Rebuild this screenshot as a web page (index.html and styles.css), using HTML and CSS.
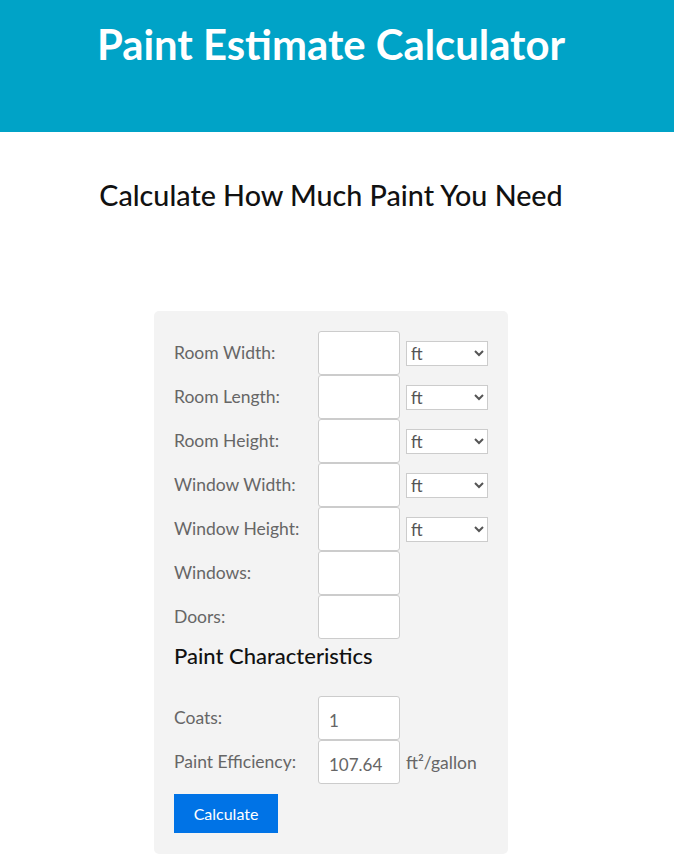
FILE: index.html
```html
<!DOCTYPE html>
<html lang="en">
<head>
    <meta charset="utf-8">
    <title>Paint Estimate Calculator</title>
    <link rel="stylesheet" href="styles.css">
</head>
<body>
    <header class="top">
        <h1>Paint Estimate Calculator</h1>
    </header>
    <main class="page">
        <h2 class="subtitle">Calculate How Much Paint You Need</h2>
        <form class="calc">
            <div class="row">
                <label>Room Width:</label>
                <input type="text" class="num">
                <select class="unit"><option>ft</option><option>m</option></select>
            </div>
            <div class="row">
                <label>Room Length:</label>
                <input type="text" class="num">
                <select class="unit"><option>ft</option><option>m</option></select>
            </div>
            <div class="row">
                <label>Room Height:</label>
                <input type="text" class="num">
                <select class="unit"><option>ft</option><option>m</option></select>
            </div>
            <div class="row">
                <label>Window Width:</label>
                <input type="text" class="num">
                <select class="unit"><option>ft</option><option>m</option></select>
            </div>
            <div class="row">
                <label>Window Height:</label>
                <input type="text" class="num">
                <select class="unit"><option>ft</option><option>m</option></select>
            </div>
            <div class="row">
                <label>Windows:</label>
                <input type="text" class="num">
            </div>
            <div class="row">
                <label>Doors:</label>
                <input type="text" class="num">
            </div>
            <h3 class="section">Paint Characteristics</h3>
            <div class="row">
                <label>Coats:</label>
                <input type="text" class="num" value="1">
            </div>
            <div class="row">
                <label>Paint Efficiency:</label>
                <input type="text" class="num" value="107.64">
                <span class="suffix">ft²/gallon</span>
            </div>
            <button type="button" class="go">Calculate</button>
        </form>
    </main>
</body>
</html>
```

FILE: styles.css
```css
body {
    margin: 0;
    font-family: Lato, "Open Sans", sans-serif;
    color: #111;
}
.top {
    background-color: #00a3c7;
    height: 132px;
    padding-top: 18px;
    box-sizing: border-box;
}
.top h1 {
    margin: 0;
    padding-right: 12px;
    text-align: center;
    color: #fff;
    font-size: 41.8px;
    font-weight: 700;
    line-height: 52px;
}
.page {
    padding-right: 12px;
    display: flex;
    flex-direction: column;
    align-items: center;
}
.subtitle {
    margin: 44px 0 97px;
    font-size: 28.7px;
    font-weight: 500;
    line-height: 38px;
}
.calc {
    width: 354px;
    box-sizing: border-box;
    background-color: #f3f3f3;
    border-radius: 5px;
    padding: 20px 20px 21px;
    margin-bottom: 10px;
}
.row {
    display: flex;
    align-items: center;
    height: 44px;
}
.row label {
    width: 144px;
    color: #666;
    font-size: 17.5px;
    margin-top: -2px;
}
.num {
    width: 82px;
    height: 44px;
    box-sizing: border-box;
    border: 1px solid #ccc;
    border-radius: 3px;
    padding: 4px 10px 0;
    font-family: inherit;
    font-size: 17px;
    color: #666;
    background: #fff;
}
.unit {
    width: 82px;
    height: 25px;
    margin-left: 6px;
    box-sizing: border-box;
    border: 1px solid #ccc;
    border-radius: 0;
    background: #fff;
    font-family: inherit;
    font-size: 17px;
    color: #555;
}
.section {
    margin: 2px 0 25px;
    font-size: 22px;
    font-weight: 500;
    line-height: 30px;
}
.suffix {
    margin-left: 6px;
    color: #666;
    font-size: 17.5px;
}
.go {
    margin-top: 10px;
    width: 104px;
    height: 39px;
    border: none;
    background-color: #0073e6;
    color: #fff;
    font-family: inherit;
    font-size: 16px;
}
```
